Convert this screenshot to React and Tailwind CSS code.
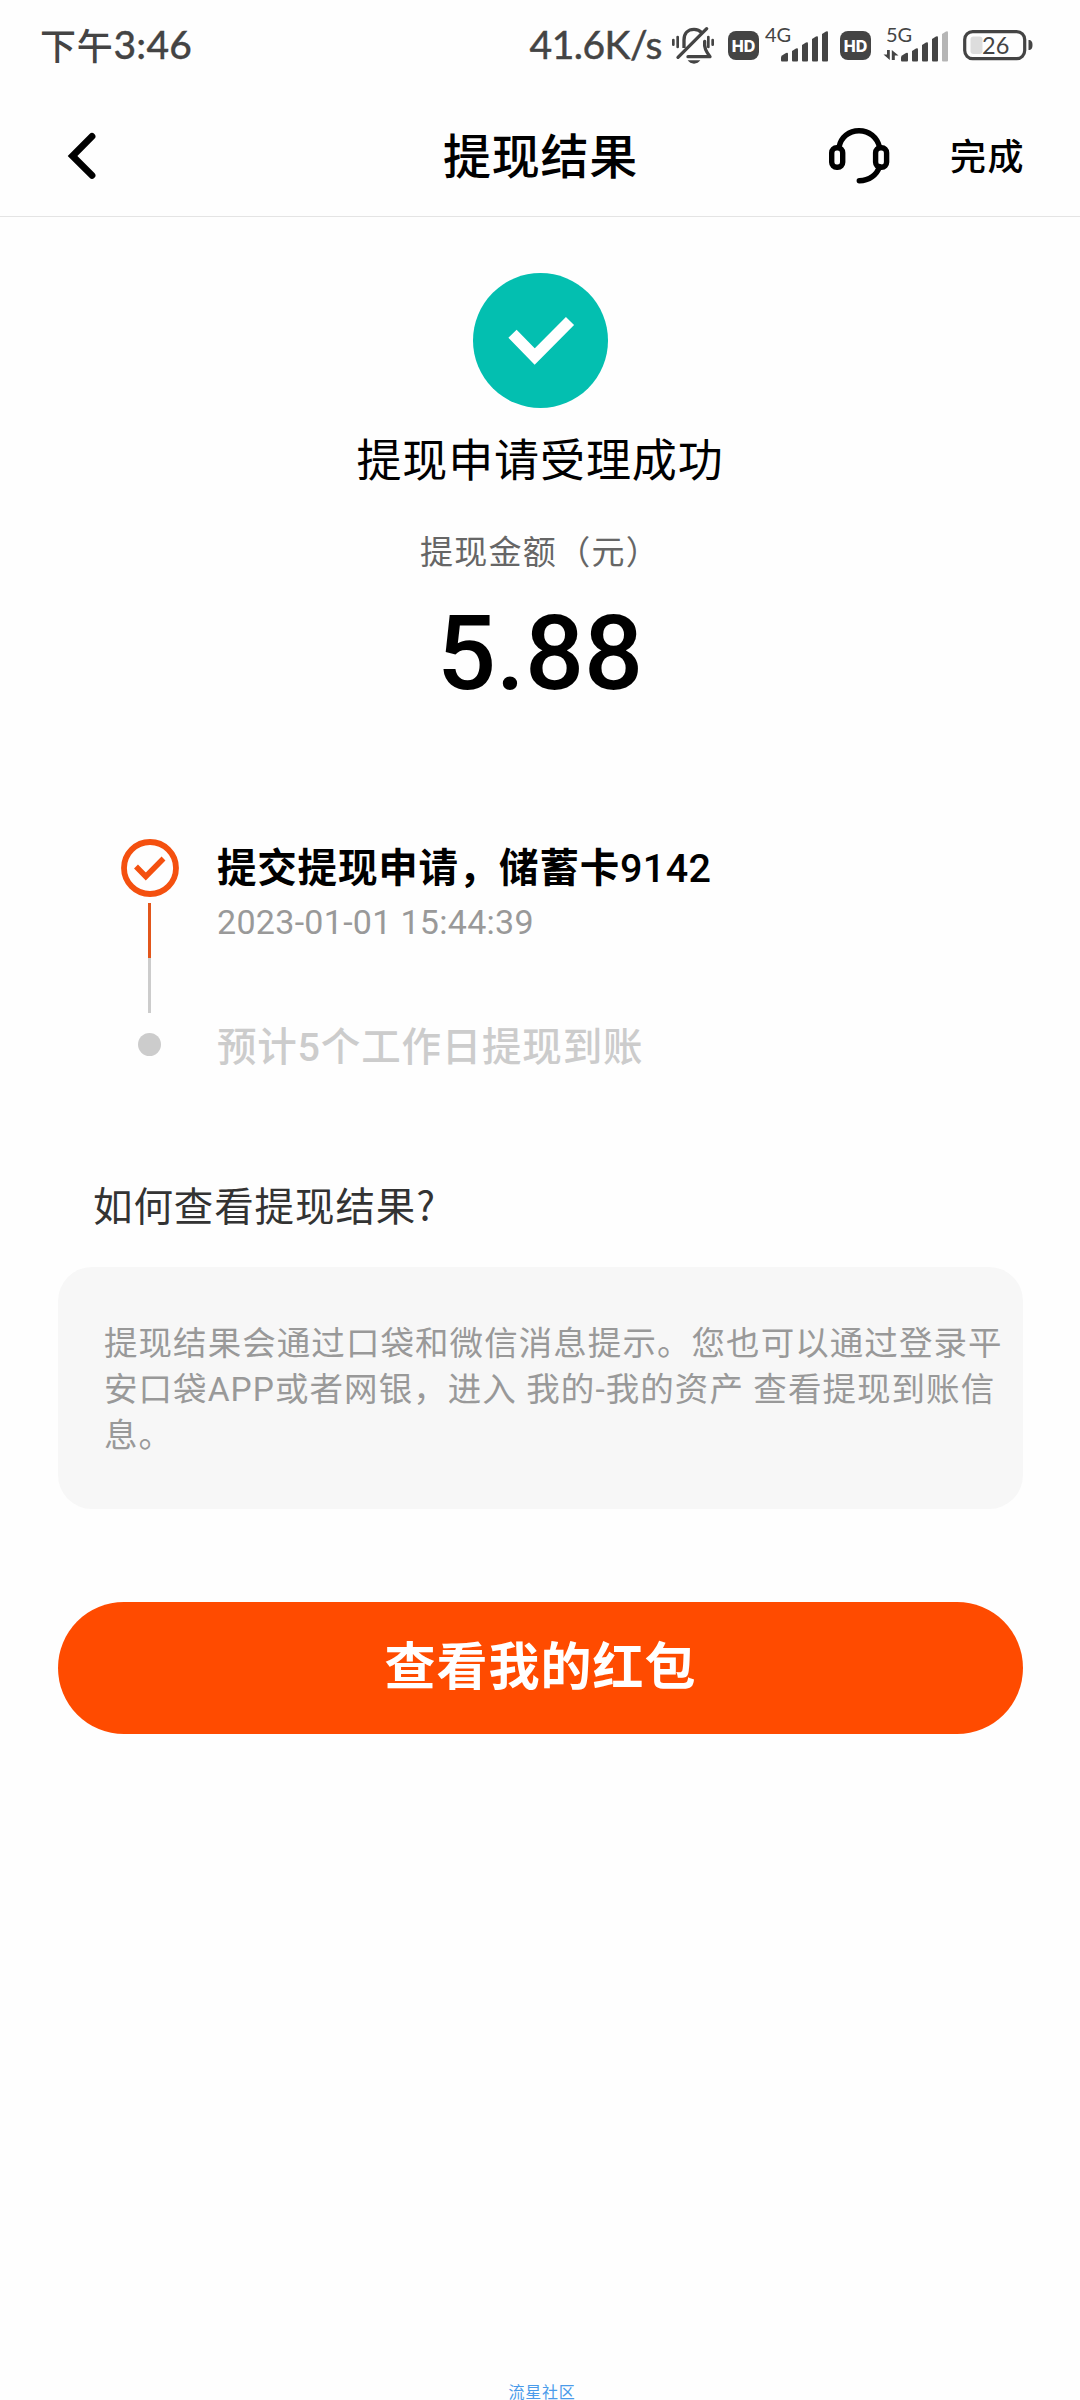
import React from 'react';

const TIP_LINES = [
  '提现结果会通过口袋和微信消息提示。您也可以通过登录平',
  '安口袋APP或者网银，进入 我的-我的资产 查看提现到账信',
  '息。'
];

function MutedBellIcon() {
  return (
    <svg width="46" height="40" viewBox="0 0 138 120" className="ml-[8px] shrink-0" fill="none" stroke="#444" strokeWidth="10">
      <path d="M10 42v14M23 33v30M128 42v14M115 33v30" strokeWidth="8" strokeLinecap="round" />
      <path d="M42 66V42C42 22 54 10 72 10C84 10 90 14 95 20" />
      <path d="M104 46C102 66 108 76 120 92H54" strokeLinejoin="round" strokeLinecap="round" />
      <path d="M24 94L110 8" strokeLinecap="round" />
      <path d="M53 103h38c-4 6-11 10-19 10s-15-4-19-10z" fill="#444" stroke="none" />
    </svg>
  );
}

function HdBadge() {
  return (
    <div className="w-[31px] h-[29px] rounded-[8px] bg-[#444] flex items-center justify-center shrink-0">
      <span className="font-[Inter,sans-serif] font-extrabold text-[16px] leading-none text-white">HD</span>
    </div>
  );
}

function SignalBars({ weak }) {
  return (
    <svg width="48" height="32" viewBox="0 0 48 32" className="shrink-0" fill="#444">
      <path d="M0 30.5v-3q0-1 1-2l4-2.5q2-1 2 1v6.5q0 1-1 1h-5q-1 0-1-1z" />
      <path d="M11 30.5v-9.5l4-2.5q2-1 2 1v11q0 1-1 1h-4q-1 0-1-1z" />
      <path d="M21 30.5v-15.5l4-2.5q2-1 2 1v17q0 1-1 1h-4q-1 0-1-1z" />
      <path d="M31 30.5v-21.5l4-2.5q2-1 2 1v23q0 1-1 1h-4q-1 0-1-1z" />
      <path d="M41 30.5v-26.5l4-2.5q2-1 2 1v28q0 1-1 1h-4q-1 0-1-1z" fill={weak ? '#b5b5b5' : '#444'} />
    </svg>
  );
}

function StatusBar() {
  return (
    <div className="h-[88px] pl-[40px] pr-[47px] flex items-start justify-between text-[#444]">
      <div className="mt-[20px] flex items-center leading-[48px] font-medium">
        <span className="font-['Noto_Sans_CJK_SC',sans-serif] text-[36px] tracking-[0.7px]">下午</span>
        <span className="font-[Lato,sans-serif] text-[39px] tracking-[0.3px] [-webkit-text-stroke:0.3px_#444]">3:46</span>
      </div>

      <div className="flex items-start">
        <span className="mt-[20px] font-[Lato,sans-serif] text-[39px] leading-[48px] tracking-[-0.5px] [-webkit-text-stroke:0.5px_#444]">41.6K/s</span>
        <div className="mt-[26px]">
          <MutedBellIcon />
        </div>
        <div className="mt-[31px] ml-[12px]">
          <HdBadge />
        </div>
        <div className="relative mt-[30px] ml-[22px]">
          <SignalBars />
          <span className="absolute -left-[16px] -top-[6px] font-[Lato,sans-serif] text-[20px] leading-[20px]">4G</span>
        </div>
        <div className="mt-[31px] ml-[11px]">
          <HdBadge />
        </div>
        <div className="relative mt-[30px] ml-[30px]">
          <SignalBars weak />
          <span className="absolute -left-[15px] -top-[6px] font-[Lato,sans-serif] text-[20px] leading-[20px]">5G</span>
          <svg width="16" height="12" viewBox="0 0 16 12" className="absolute -left-[18px] top-[19px]" fill="#444">
            <path d="M4 1h2.8v10L0.5 5.5H4zM8.8 1L15.5 6.5H11.8V11H8.8z" />
          </svg>
        </div>
        <svg width="70" height="32" viewBox="0 0 70 32" className="mt-[29px] ml-[14px] shrink-0">
          <rect x="1.7" y="2.6" width="60" height="27" rx="8" fill="none" stroke="#444" strokeWidth="3.2" />
          <rect x="7.5" y="7.5" width="12" height="17.5" rx="3" fill="#ddd" />
          <path d="M65.5 11c3 0 4 2 4 5s-1 5-4 5z" fill="#444" />
          <text x="19" y="24.5" fontSize="23.5" fontFamily="Lato, sans-serif" fill="#444">26</text>
        </svg>
      </div>
    </div>
  );
}

function Header() {
  return (
    <div className="h-[129px] border-b border-[#e4e4e4] grid grid-cols-3 items-start text-black font-medium">
      <svg width="34" height="48" viewBox="0 0 34 48" className="mt-[44px] ml-[66px]" fill="none" stroke="#000" strokeWidth="6.8">
        <path d="M26 4.400L6.500 24L26 43.400" strokeLinecap="round" />
      </svg>
      <h1 className="mt-[29px] text-center text-[48px] leading-[72px] tracking-[0.7px] -mr-px font-medium">提现结果</h1>
      <div className="flex items-start justify-end pr-[55px]">
        <svg width="62" height="58" viewBox="0 0 62 58" className="mt-[39px] mr-[60px]" fill="none" stroke="#000" strokeWidth="5.4">
          <rect x="3.7" y="20.7" width="11" height="19.5" rx="5" />
          <rect x="47.6" y="20.7" width="11" height="19.5" rx="5" />
          <path d="M11 20C13 10 21 3.7 31 3.7S49 10 51.5 20" />
          <path d="M51.5 39.5C49 48 41 53.5 31.3 53.7" strokeLinecap="round" />
        </svg>
        <span className="mt-[36px] text-[36px] leading-[60px] tracking-[1.5px]">完成</span>
      </div>
    </div>
  );
}

function ResultSummary() {
  return (
    <div className="pt-[56px] flex flex-col items-center">
      <svg width="135" height="135" viewBox="0 0 135 135">
        <circle cx="67.5" cy="67.5" r="67.5" fill="#03bfb0" />
        <path d="M39.5 60.7L61.7 83.5L97 48" fill="none" stroke="#fff" strokeWidth="11.5" />
      </svg>
      <p className="mt-[18px] text-[45px] leading-[64px] tracking-[0.9px] text-black">提现申请受理成功</p>
      <p className="mt-[35px] text-[33px] leading-[50px] tracking-[1.3px] text-[#666]">提现金额（元）</p>
      <p className="mt-[18px] font-[Roboto,sans-serif] font-medium text-[104px] leading-[122px] text-black">5.88</p>
    </div>
  );
}

function Timeline() {
  return (
    <div className="mt-[124px] ml-[121px] flex gap-[38px] whitespace-nowrap">
      <div className="w-[58px] flex flex-col items-center">
        <svg width="58" height="58" viewBox="0 0 58 58" fill="none" stroke="#f4500f">
          <circle cx="29" cy="29" r="26" strokeWidth="5.8" />
          <path d="M15 27.5L24.800 37.5L42.500 19.5" strokeWidth="5.5" />
        </svg>
        <div className="mt-[6px] w-[3px] h-[55px] -ml-px bg-[#e2561b]" />
        <div className="w-[3px] h-[55px] -ml-px bg-[#ccc]" />
        <div className="mt-[20px] w-[23px] h-[23px] -ml-px rounded-full bg-[#ccc]" />
      </div>
      <div className="pt-[2px] font-[Roboto,'Noto_Sans_CJK_SC',sans-serif]">
        <p className="text-[39.5px] leading-[55px] tracking-[0.8px] font-bold text-black">
          提交提现申请，储蓄卡<span className="font-medium tracking-[0.4px]">9142</span>
        </p>
        <p className="text-[34px] leading-[52px] tracking-[0.3px] text-[#999]">2023-01-01 15:44:39</p>
        <p className="mt-[71px] text-[39.5px] leading-[57px] tracking-[0.8px] font-medium text-[#ccc]">
          预计5个工作日提现到账
        </p>
      </div>
    </div>
  );
}

export default function App() {
  return (
    <div className="w-[1080px] h-[2400px] overflow-hidden bg-[#fefefe] flex flex-col font-['Noto_Sans_CJK_SC',sans-serif]" lang="zh-CN">
      <StatusBar />
      <Header />
      <ResultSummary />
      <Timeline />

      <h2 className="mt-[98px] ml-[93px] text-[39.5px] leading-[60px] tracking-[0.9px] text-[#333]">如何查看提现结果?</h2>

      <div className="mt-[33px] ml-[58px] mr-[57px] h-[242px] rounded-[34px] bg-[#f7f7f7] pt-[54px] pl-[46px]">
        {TIP_LINES.map((line) => (
          <p
            key={line}
            className="font-[Roboto,'Noto_Sans_CJK_SC',sans-serif] text-[33.5px] leading-[46px] tracking-[1.06px] whitespace-nowrap text-[#999]"
          >
            {line}
          </p>
        ))}
      </div>

      <button className="mt-[93px] ml-[58px] mr-[57px] h-[132px] rounded-full bg-[#ff4b00] pb-[10px] text-[51px] leading-[72px] tracking-[1px] font-bold text-white shrink-0">
        查看我的红包
      </button>

      <p className="mt-auto pl-[4px] text-center text-[16px] leading-[17px] tracking-[0.8px] text-[#4a9bea]">流星社区</p>
    </div>
  );
}
